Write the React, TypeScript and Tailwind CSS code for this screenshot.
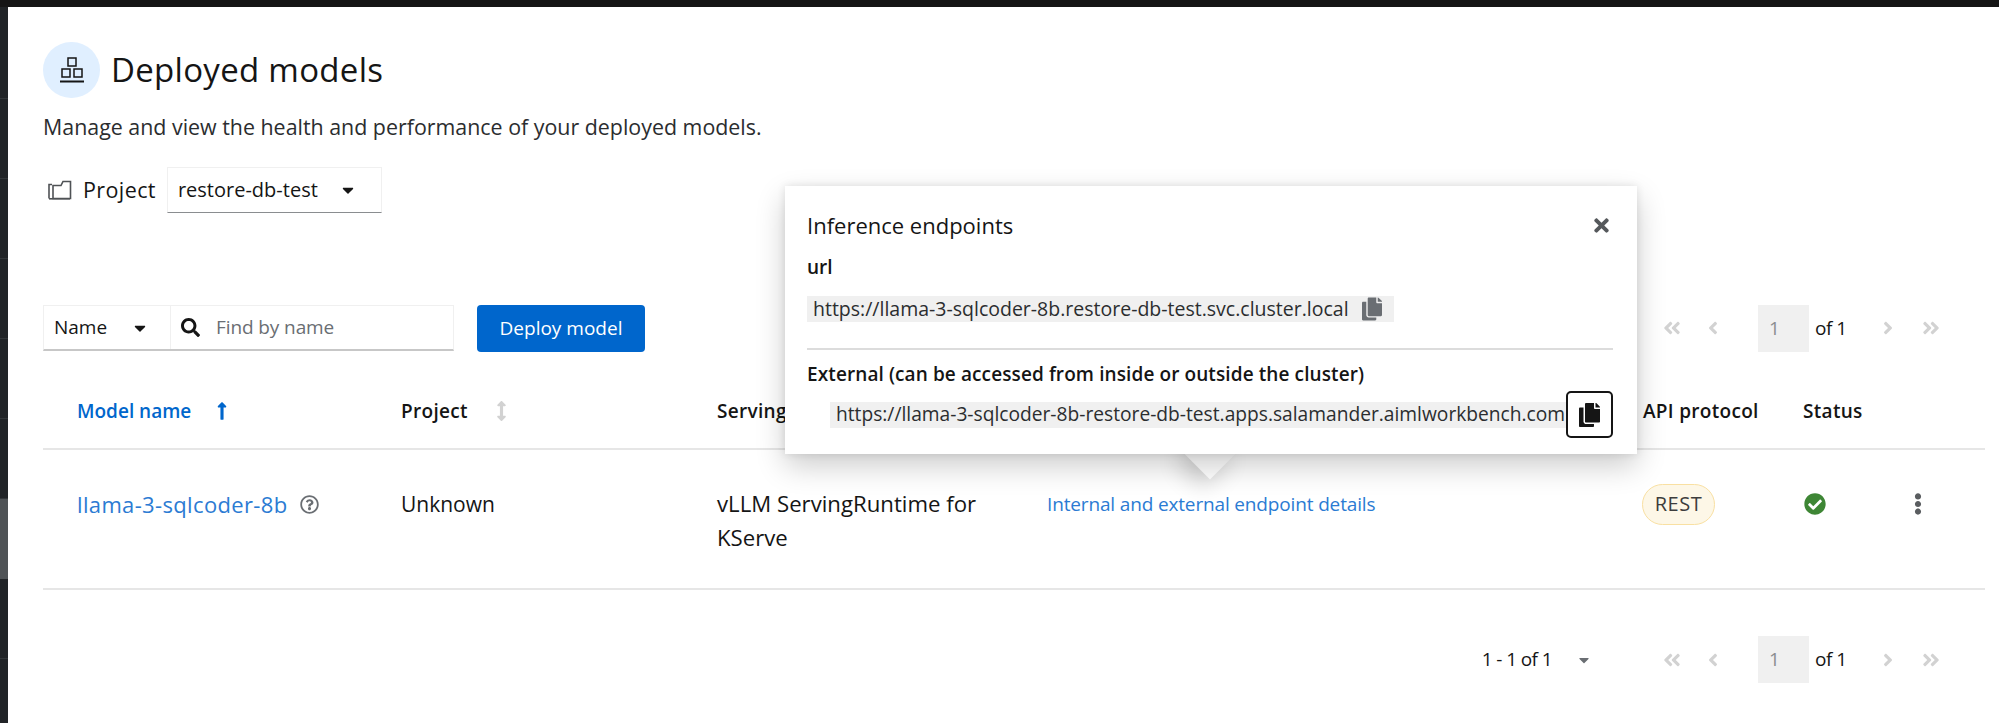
import {
  FaAngleDoubleLeft,
  FaAngleDoubleRight,
  FaAngleLeft,
  FaAngleRight,
  FaArrowsAltV,
  FaCaretDown,
  FaCheckCircle,
  FaCopy,
  FaEllipsisV,
  FaLongArrowAltUp,
  FaRegQuestionCircle,
  FaSearch,
  FaTimes,
} from 'react-icons/fa';

const sidebarRows = [0, 1, 2, 3, 4, 5, 6, 7, 8];

const Pager = () => (
  <div className="flex items-center text-[#d2d2d2]">
    <FaAngleDoubleLeft className="w-[20px] h-[20px]" />
    <FaAngleLeft className="w-[20px] h-[20px] ml-[21px]" />
    <div className="w-[51px] h-[47px] ml-[35px] bg-[#f0f0f0] flex items-center pl-[11px] text-[#8a8d90]">1</div>
    <span className="ml-[6px] w-[40px] text-[#151515] tracking-[-0.5px]">of 1</span>
    <FaAngleRight className="w-[20px] h-[20px] ml-[23px]" />
    <FaAngleDoubleRight className="w-[20px] h-[20px] ml-[23px]" />
  </div>
);

const ModelsIcon = () => (
  <svg viewBox="0 0 30 30" className="w-[30px] h-[30px]" fill="none" stroke="#151515" strokeWidth="1.5">
    <rect x="11" y="3" width="8" height="8" />
    <rect x="5" y="14" width="8" height="8" />
    <rect x="17" y="14" width="8" height="8" />
    <path d="M3 26.5h24" strokeWidth="2" />
  </svg>
);

const ProjectIcon = () => (
  <svg viewBox="0 0 24 20" className="w-[24px] h-[20px]" fill="none" stroke="#4f5255" strokeWidth="1.6">
    <path d="M5 18.5V5.5h8l2-4h7.5v17z" />
    <path d="M1 18.5V4.5h3" />
    <path d="M1 18.8h21" />
  </svg>
);

export default function App() {
  return (
    <div className="w-[1999px] h-[723px] overflow-hidden bg-[#151515] flex flex-col font-['Open_Sans',sans-serif] text-[20px] text-[#151515]">
      <div className="h-[7px] shrink-0" />
      <div className="flex flex-1 min-h-0">
        <div className="w-[8px] shrink-0 bg-[#212427] pt-[12px]">
          {sidebarRows.map((row) => (
            <div
              key={row}
              className={row === 6 ? 'h-[80px] bg-[#4f5356]' : 'h-[80px] border-b border-[#33373a]'}
            />
          ))}
        </div>

        <main className="relative flex-1 bg-white pl-[35px] pr-[14px] pt-[35px]">
          <div className="flex items-center gap-[11px]">
            <div className="w-[57px] h-[56px] rounded-full bg-[#e0efff] flex items-center justify-center">
              <ModelsIcon />
            </div>
            <h1 className="text-[33px] leading-[56px] font-medium tracking-[0.3px]">Deployed models</h1>
          </div>
          <p className="mt-[14px] leading-[30px] text-[21.4px] text-[#2b2d2f]">
            Manage and view the health and performance of your deployed models.
          </p>

          <div className="mt-[25px] flex items-center h-[46px]">
            <span className="ml-[5px]"><ProjectIcon /></span>
            <span className="ml-[11px] text-[21.5px] tracking-[0.4px]">Project</span>
            <div className="ml-[11px] w-[215px] h-[46px] border border-[#f0f0f0] border-b-[#8a8d90] flex items-center pl-[10px] pr-[24px] justify-between text-[20px]">
              restore-db-test
              <FaCaretDown className="w-[18px] h-[18px] shrink-0" />
            </div>
          </div>

          <div className="mt-[92px] flex items-center h-[46px]">
            <div className="flex w-[411px] h-[46px] border border-[#f0f0f0] border-b-2 border-b-[#c7c7c7]">
              <div className="w-[127px] flex items-center justify-between pl-[10px] pr-[21px] border-r border-[#f0f0f0] text-[19px]">
                Name
                <FaCaretDown className="w-[18px] h-[18px]" />
              </div>
              <div className="flex items-center pl-[10px] text-[#6a6e73] text-[19px] tracking-[-0.1px]">
                <FaSearch className="w-[19px] h-[19px] text-[#151515] mr-[16px]" />
                Find by name
              </div>
            </div>
            <button className="ml-[23px] w-[168px] h-[47px] rounded-[4px] bg-[#0066cc] text-white text-[19px]">
              Deploy model
            </button>
            <div className="ml-auto mr-[44px] text-[19px]">
              <Pager />
            </div>
          </div>

          <div className="mt-[23px] grid grid-cols-[324px_316px_330px_596px_160px_1fr] h-[76px] items-center border-b-2 border-[#e6e6e6] font-semibold text-[19px] tracking-[0.3px]">
            <div className="pl-[34px] flex items-center text-[#0066cc] tracking-[0px]">
              Model name
              <FaLongArrowAltUp className="w-[20px] h-[20px] ml-[21px]" />
            </div>
            <div className="pl-[34px] flex items-center">
              Project
              <FaArrowsAltV className="w-[17px] h-[20px] ml-[25px] text-[#d2d2d2]" />
            </div>
            <div className="pl-[34px]">Serving runtime</div>
            <div className="pl-[34px]">Inference endpoints</div>
            <div className="pl-[34px]">API protocol</div>
            <div className="pl-[34px]">Status</div>
          </div>

          <div className="grid grid-cols-[324px_316px_330px_596px_160px_1fr] pt-[37px] pb-[33px] leading-[34px] border-b-2 border-[#e6e6e6]">
            <div className="pl-[34px] flex items-center h-[34px]">
              <span className="text-[#2b7bd3] text-[22px] tracking-[0.35px]">llama-3-sqlcoder-8b</span>
              <FaRegQuestionCircle className="w-[19px] h-[19px] ml-[12px] text-[#6a6e73]" />
            </div>
            <div className="pl-[34px] text-[21px]">Unknown</div>
            <div className="pl-[34px] pr-[20px] text-[22.2px]">vLLM ServingRuntime for KServe</div>
            <div className="pl-[34px] text-[#2b7bd3] text-[19px] tracking-[-0.15px]">Internal and external endpoint details</div>
            <div className="pl-[33px]">
              <span className="inline-flex items-center justify-center w-[73px] h-[41px] -mt-[4px] rounded-full bg-[#fdf7e7] border border-[#f9e0a2] text-[20px] tracking-[0.5px] text-[#3d3d3d]">
                REST
              </span>
            </div>
            <div className="pl-[35px] flex items-center justify-between h-[34px] pr-[56px]">
              <FaCheckCircle className="w-[22px] h-[22px] text-[#3e8635]" />
              <FaEllipsisV className="w-[22px] h-[22px] text-[#5a5d60]" />
            </div>
          </div>

          <div className="mt-[46px] flex items-center justify-end mr-[44px] text-[19px]">
            <span className="font-medium tracking-[-0.6px]">1 - 1 of 1</span>
            <FaCaretDown className="w-[16px] h-[16px] ml-[24px] mr-[70px] text-[#6a6e73]" />
            <Pager />
          </div>

          {/* popover sits above the table */}
          <div className="absolute left-[777px] top-[179px] w-[852px] h-[268px]">
            <div className="absolute left-[407px] top-[250px] w-[36px] h-[36px] rotate-45 bg-white shadow-[0_10px_25px_rgba(3,3,3,0.2)]" />
            <div className="relative h-full bg-white pl-[22px] pr-[24px] pt-[24px] shadow-[0_12px_28px_rgba(3,3,3,0.2),0_0_8px_rgba(3,3,3,0.1)]">
              <div className="flex items-center justify-between h-[30px]">
                <span className="text-[22px] font-medium">Inference endpoints</span>
                <FaTimes className="w-[21px] h-[21px] mr-[1px] text-[#55585b]" />
              </div>
              <div className="mt-[12px] leading-[30px] font-semibold text-[19px]">url</div>
              <div className="mt-[14px] w-[587px] h-[26px] bg-[#f0f0f0] flex items-center justify-between pl-[6px] pr-[12px] text-[19.5px] text-[#2b2d2f] whitespace-nowrap">
                https://llama-3-sqlcoder-8b.restore-db-test.svc.cluster.local
                <FaCopy className="w-[20px] h-[24px] text-[#6a6e73] shrink-0" />
              </div>
              <div className="mt-[26px] h-[2px] bg-[#dcdcdc]" />
              <div className="mt-[10px] leading-[28px] font-semibold text-[19px] tracking-[0.1px] whitespace-nowrap">
                External (can be accessed from inside or outside the cluster)
              </div>
              <div className="mt-[3px] ml-[23px] flex items-center">
                <div className="w-[737px] h-[26px] bg-[#f0f0f0] pl-[6px] flex items-center text-[19.2px] text-[#2b2d2f] whitespace-nowrap overflow-hidden">
                  https://llama-3-sqlcoder-8b-restore-db-test.apps.salamander.aimlworkbench.com
                </div>
                <div className="w-[47px] h-[47px] -ml-[1px] rounded-[5px] border-2 border-[#151515] bg-white flex items-center justify-center shrink-0">
                  <FaCopy className="w-[21px] h-[24px] text-[#151515]" />
                </div>
              </div>
            </div>
          </div>
        </main>
      </div>
    </div>
  );
}
